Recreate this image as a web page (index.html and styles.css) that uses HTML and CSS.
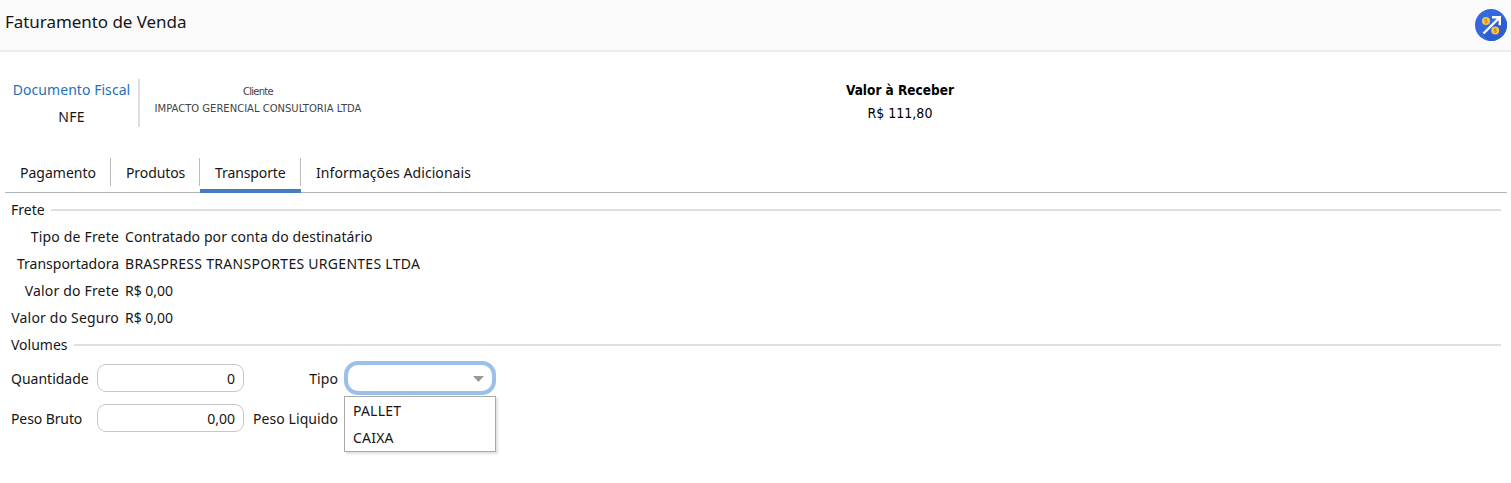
FILE: index.html
```html
<!DOCTYPE html>
<html lang="pt-BR">
<head>
<meta charset="utf-8">
<title>Faturamento de Venda</title>
<link rel="stylesheet" href="styles.css">
</head>
<body>
<header class="topbar">
  <h1 class="title">Faturamento de Venda</h1>
  <svg class="logo" width="32" height="32" viewBox="0 0 32 32">
    <circle cx="16" cy="16" r="16" fill="#3468df"/>
    <path d="M31.500 12 A16 16 0 0 1 14 31.900 L8 25 L25 8 Z" fill="#2d5dd2"/>
    <circle cx="11" cy="12" r="4" fill="#f6c544"/>
    <circle cx="20.200" cy="21.500" r="4" fill="#f6c544"/>
    <path d="M12.200 10.400h-1.700q-.9 0-.9.800t.9.800h1q.9 0 .9.800t-.9.800H9.800M11 9.600v4.800M21.400 19.900h-1.700q-.9 0-.9.800t.9.800h1q.9 0 .9.800t-.9.800H19M20.200 19.100v4.800" fill="none" stroke="#c98517" stroke-width=".8"/>
    <path d="M8.500 24.500L24.200 8.800M17 8.300h7.800v7.900" fill="none" stroke="#fff" stroke-width="2.400"/>
  </svg>
</header>
<section class="summary">
  <div class="document"><span class="link">Documento Fiscal</span><span class="kind">NFE</span></div>
  <div class="client"><span class="client-label">Cliente</span><span>IMPACTO GERENCIAL CONSULTORIA LTDA</span></div>
  <div class="receive"><strong class="receive-label">Valor à Receber</strong><span>R$ 111,80</span></div>
</section>
<nav class="tabs">
  <a class="tab tab-pay">Pagamento</a>
  <a class="tab tab-prod">Produtos</a>
  <a class="tab tab-trans active">Transporte</a>
  <a class="tab tab-info">Informações Adicionais</a>
</nav>
<main class="panel">
  <h2 class="legend">Frete</h2>
  <dl class="details">
    <dt>Tipo de Frete</dt><dd>Contratado por conta do destinatário</dd>
    <dt class="tight">Transportadora</dt><dd class="caps">BRASPRESS TRANSPORTES URGENTES LTDA</dd>
    <dt>Valor do Frete</dt><dd class="money">R$ 0,00</dd>
    <dt>Valor do Seguro</dt><dd class="money">R$ 0,00</dd>
  </dl>
  <h2 class="legend">Volumes</h2>
  <div class="form">
    <span class="label">Quantidade</span><div class="field">0</div>
    <span class="label right">Tipo</span>
    <div class="select">
      <svg class="caret" width="11" height="6" viewBox="0 0 11 6"><path d="M0 0h11L5.500 6z" fill="#999"/></svg>
      <ul class="menu"><li>PALLET</li><li>CAIXA</li></ul>
    </div>
    <span class="label tight">Peso Bruto</span><div class="field">0,00</div>
    <span class="label right">Peso Liquido</span>
  </div>
</main>
</body>
</html>
```
FILE: styles.css
```css
* { box-sizing: border-box; }
body { margin: 0; height: 483px; overflow: hidden; background: #fff; color: #161616; font: 14px/27px "Noto Sans", "Open Sans", sans-serif; white-space: nowrap; }
.topbar { display: flex; justify-content: space-between; height: 52px; padding: 8px 4px 0 5px; background: #fafafa; border-bottom: 2px solid #ebebeb; }
.title { margin: 0; font-size: 17px; font-weight: 400; line-height: 28px; letter-spacing: -.05px; }
.logo { display: block; margin-top: 1px; }
.summary { display: flex; height: 106px; padding-top: 27px; }
.document { display: flex; flex-direction: column; align-items: center; width: 140px; height: 48px; padding-left: 5px; border-right: 2px solid #ddd; }
.document > span { margin-top: -3px; margin-bottom: 3px; }
.link { color: #2272b9; letter-spacing: .05px; }
.kind { letter-spacing: .2px; }
.client { display: flex; flex-direction: column; align-items: center; width: 236px; padding-top: 4px; font: 10px/17px "DejaVu Sans", sans-serif; color: #444; }
.client-label { letter-spacing: -.75px; }
.receive { display: flex; flex-direction: column; align-items: center; width: 200px; margin-left: 424px; font: 14px/23px "DejaVu Sans Condensed", "DejaVu Sans", sans-serif; color: #000; }
.receive-label { font-size: 13.5px; }
.tabs { display: flex; height: 35px; margin: 0 4px 0 5px; border-bottom: 1px solid #b5b5b5; }
.tab { height: 35px; padding-left: 15px; line-height: 29px; background: linear-gradient(#bbb, #bbb) right 0 / 1px 28px no-repeat; }
.tab-pay { width: 106px; }
.tab-prod { width: 89px; letter-spacing: -.1px; }
.tab-trans { width: 101px; letter-spacing: -.1px; }
.tab-info { background: none; letter-spacing: .06px; }
.active { border-bottom: 4px solid #447ebd; }
.panel { padding: 3px 10px 0 11px; }
.legend { display: flex; align-items: center; gap: 6px; height: 27px; margin: 0; font-size: 14px; font-weight: 400; }
.legend::after { content: ""; flex: 1; height: 2px; background: #e0e0e0; }
.details { display: grid; grid-template-columns: 108px 1fr; column-gap: 6px; margin: 0; }
.details dt { text-align: right; letter-spacing: .18px; }
.details dt.tight { letter-spacing: 0; }
.details dd { margin: 0; letter-spacing: .08px; }
.details .caps { letter-spacing: .28px; }
.details .money { letter-spacing: 0; }
.form { display: grid; grid-template-columns: 86px 148px 93px 152px; grid-template-rows: 40px 40px; align-items: center; line-height: 28px; }
.label { padding-top: 2px; }
.label.tight { letter-spacing: -.1px; }
.right { text-align: right; letter-spacing: .07px; }
.field { height: 28px; width: 147px; border: 1px solid #c8c8c8; border-radius: 9px; padding-right: 8px; text-align: right; line-height: 27px; }
.select { position: relative; display: flex; align-items: center; justify-content: flex-end; width: 152px; height: 34px; margin-left: 6px; padding: 2px 8px 0 0; border: 4px solid #9bbfea; border-radius: 14px; }
.menu { position: absolute; left: -4px; top: 31px; width: 152px; height: 56px; margin: 0; padding: 0 0 0 8px; list-style: none; background: #fff; border: 1px solid #aaa; box-shadow: 2px 2px 2px rgba(0,0,0,.12); line-height: 27px; letter-spacing: .2px; }
```
